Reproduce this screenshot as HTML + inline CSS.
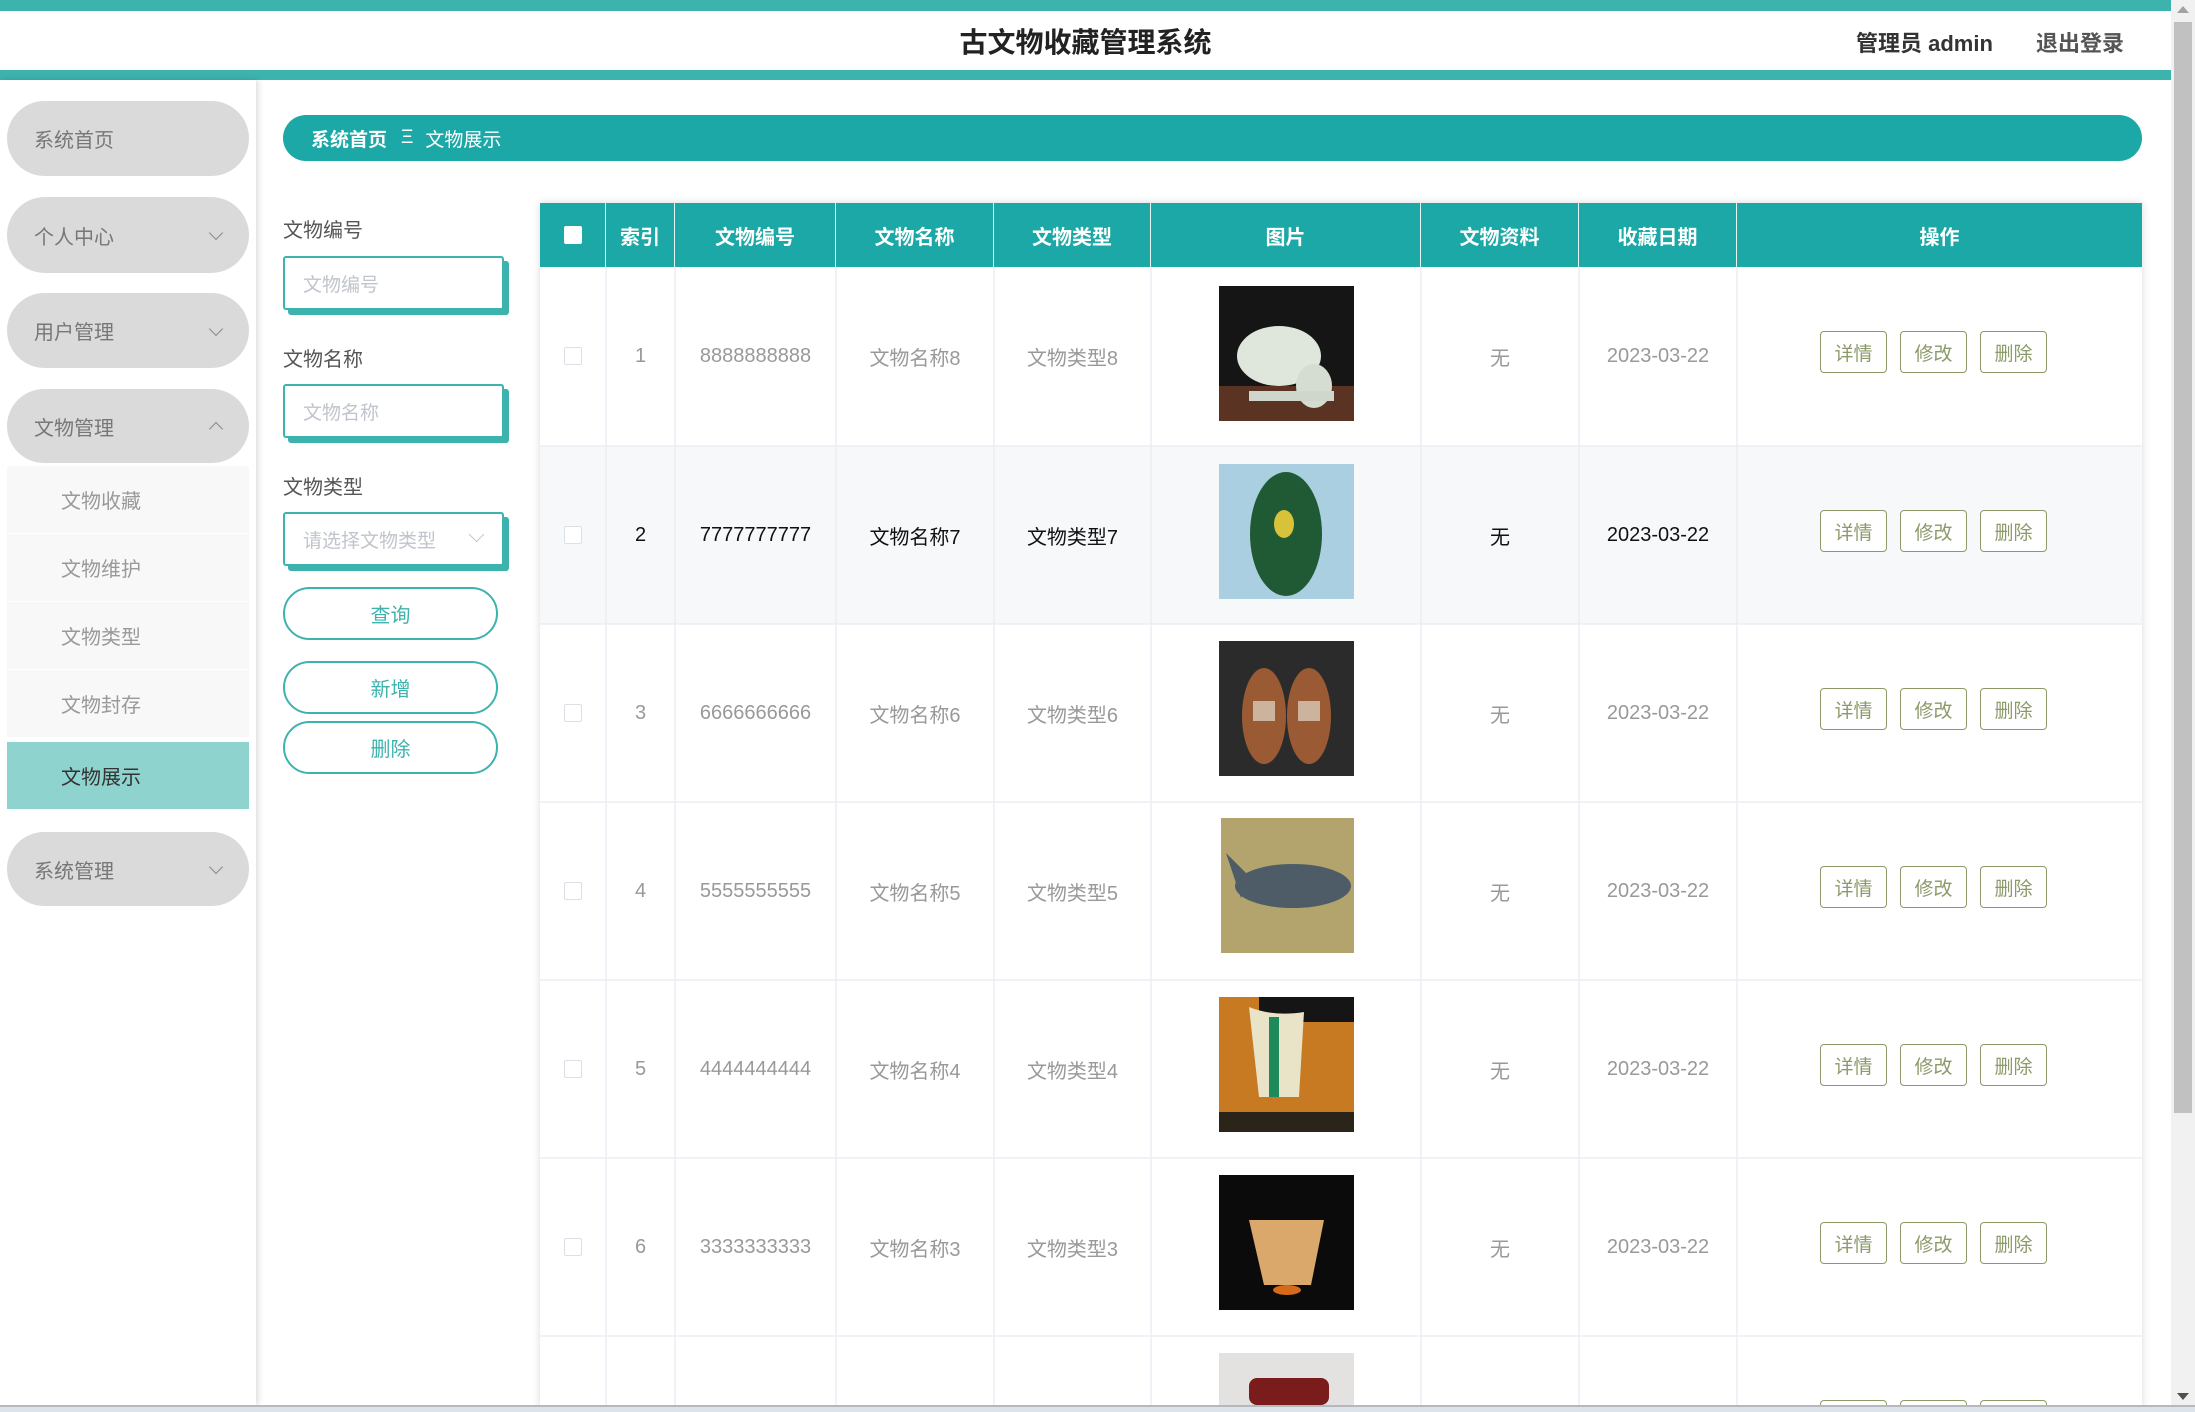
<!DOCTYPE html>
<html style="width:2195px;height:1412px;overflow:hidden"><head><meta charset="utf-8"><style>
*{margin:0;padding:0;box-sizing:border-box}
body{width:2195px;height:1412px;overflow:hidden;background:#fff;font-family:"Liberation Sans","Noto Sans CJK SC",sans-serif;position:relative}
.a{position:absolute}
.pill{position:absolute;left:7px;width:242px;background:#dadada;border-radius:40px;color:#777;font-size:20px;padding-left:27px;display:flex;align-items:center}
.pill .ch{position:absolute;right:28px;top:50%;width:10px;height:10px;border-right:1.5px solid #888;border-bottom:1.5px solid #888;transform:translateY(-70%) rotate(45deg)}
.pill .up{transform:translateY(-20%) rotate(-135deg)}
.sub{position:absolute;left:7px;width:242px;height:67px;background:#f8f8f8;color:#999;font-size:20px;padding-left:54px;display:flex;align-items:center}
.lbl{position:absolute;left:283px;font-size:20px;color:#555}
.inp{position:absolute;left:283px;width:221px;height:54px;border:2px solid #3db3ad;border-radius:3px;box-shadow:5px 5px 0 #3db3ad;color:#c0c4cc;font-size:19px;padding-left:18px;display:flex;align-items:center;background:#fff}
.btn{position:absolute;left:283px;width:215px;height:53px;border:2.5px solid #3db3ad;border-radius:27px;color:#3db3ad;font-size:20px;display:flex;align-items:center;justify-content:center;background:#fff}
.th{position:absolute;top:203px;height:64px;color:#fff;font-weight:bold;font-size:20px;display:flex;align-items:center;justify-content:center;border-right:1px solid #e6f4f4}
.cell{position:absolute;display:flex;align-items:center;justify-content:center;font-size:20px;color:#999}
.ob{position:absolute;width:67px;height:42px;border:1.5px solid #8b9a68;border-radius:4px;color:#8b9a68;font-size:19px;display:flex;align-items:center;justify-content:center;background:#fff}
#clip{position:absolute;left:0;top:0;width:2195px;height:1405px;overflow:hidden}
</style></head><body>
<div id="clip">
<div class="a" style="left:0;top:0;width:2171px;height:11px;background:#3db3ad"></div>
<div class="a" style="left:0;top:70px;width:2171px;height:10px;background:#3db3ad"></div>
<div class="a" style="left:0;top:11px;width:2171px;height:59px;display:flex;align-items:center;justify-content:center;font-size:28px;font-weight:bold;color:#222">古文物收藏管理系统</div>
<div class="a" style="left:1856px;top:26px;font-size:22px;font-weight:bold;color:#333">管理员 admin</div>
<div class="a" style="left:2036px;top:26px;font-size:22px;font-weight:bold;color:#555">退出登录</div>

<div class="a" style="left:0;top:80px;width:256px;height:1325px;background:#fff;box-shadow:2px 0 6px rgba(0,0,0,.15)"></div>
<div class="pill" style="top:101px;height:75px">系统首页</div>
<div class="pill" style="top:197px;height:76px">个人中心<span class="ch"></span></div>
<div class="pill" style="top:293px;height:75px">用户管理<span class="ch"></span></div>
<div class="pill" style="top:389px;height:74px">文物管理<span class="ch up"></span></div>
<div class="sub" style="top:466px">文物收藏</div>
<div class="sub" style="top:534px">文物维护</div>
<div class="sub" style="top:602px">文物类型</div>
<div class="sub" style="top:670px">文物封存</div>
<div class="sub" style="top:742px;background:#8fd3ce;color:#333">文物展示</div>
<div class="pill" style="top:832px;height:74px">系统管理<span class="ch"></span></div>

<div class="a" style="left:283px;top:115px;width:1859px;height:46px;background:#1ca8a6;border-radius:23px;color:#fff;font-size:19px;display:flex;align-items:center;padding-left:28px"><b>系统首页</b><span style="margin:0 12px 0 14px">Ξ</span>文物展示</div>

<div class="lbl" style="top:214px">文物编号</div>
<div class="inp" style="top:256px">文物编号</div>
<div class="lbl" style="top:343px">文物名称</div>
<div class="inp" style="top:384px">文物名称</div>
<div class="lbl" style="top:471px">文物类型</div>
<div class="inp" style="top:512px;font-size:19px">请选择文物类型<span style="position:absolute;right:20px;top:15px;width:11px;height:11px;border-right:1.5px solid #c0c4cc;border-bottom:1.5px solid #c0c4cc;transform:rotate(45deg)"></span></div>
<div class="btn" style="top:587px">查询</div>
<div class="btn" style="top:661px">新增</div>
<div class="btn" style="top:721px">删除</div>

<div class="a" style="left:540px;top:203px;width:1602px;height:1210px;background:#fff;box-shadow:0 0 8px rgba(0,0,0,.15)"></div>
<div class="a" style="left:540px;top:203px;width:1602px;height:64px;background:#1ca8a6"></div>
<div class="th" style="left:540px;width:66px"><span style="width:18px;height:18px;background:#fff;border-radius:2px"></span></div>
<div class="th" style="left:606px;width:69px">索引</div>
<div class="th" style="left:675px;width:161px">文物编号</div>
<div class="th" style="left:836px;width:158px">文物名称</div>
<div class="th" style="left:994px;width:157px">文物类型</div>
<div class="th" style="left:1151px;width:270px">图片</div>
<div class="th" style="left:1421px;width:158px">文物资料</div>
<div class="th" style="left:1579px;width:158px">收藏日期</div>
<div class="th" style="left:1737px;width:405px;border-right:none">操作</div>
<div class="a" style="left:540px;top:446px;width:1602px;height:178px;background:#f7f8fa"></div>
<svg class="a" style="left:540px;top:267px" width="1602" height="1140">
<g stroke="#ebeef5" stroke-width="1.5">
<line x1="66" y1="0" x2="66" y2="1140"/><line x1="135" y1="0" x2="135" y2="1140"/><line x1="296" y1="0" x2="296" y2="1140"/><line x1="454" y1="0" x2="454" y2="1140"/><line x1="611" y1="0" x2="611" y2="1140"/><line x1="881" y1="0" x2="881" y2="1140"/><line x1="1039" y1="0" x2="1039" y2="1140"/><line x1="1197" y1="0" x2="1197" y2="1140"/>
<line x1="0" y1="179" x2="1602" y2="179"/><line x1="0" y1="357" x2="1602" y2="357"/><line x1="0" y1="535" x2="1602" y2="535"/><line x1="0" y1="713" x2="1602" y2="713"/><line x1="0" y1="891" x2="1602" y2="891"/><line x1="0" y1="1069" x2="1602" y2="1069"/>
</g></svg>

<div class="cell" style="left:540px;top:267px;width:66px;height:178px"><span style="width:18px;height:18px;border:1px solid #dcdfe6;border-radius:2px;background:#fff"></span></div>
<div class="cell" style="left:606px;top:267px;width:69px;height:178px">1</div>
<div class="cell" style="left:675px;top:267px;width:161px;height:178px">8888888888</div>
<div class="cell" style="left:836px;top:267px;width:158px;height:178px">文物名称8</div>
<div class="cell" style="left:994px;top:267px;width:157px;height:178px">文物类型8</div>
<svg class="a" style="left:1219px;top:286px" width="135" height="135"><rect width="135" height="135" fill="#151515"/><rect y="100" width="135" height="35" fill="#5a3322"/><ellipse cx="60" cy="70" rx="42" ry="30" fill="#dfe6dc"/><ellipse cx="95" cy="100" rx="18" ry="22" fill="#d5ddd2"/><rect x="30" y="105" width="85" height="10" fill="#cfd6cb"/></svg>
<div class="cell" style="left:1421px;top:267px;width:158px;height:178px">无</div>
<div class="cell" style="left:1579px;top:267px;width:158px;height:178px">2023-03-22</div>
<div class="ob" style="left:1820px;top:331px">详情</div><div class="ob" style="left:1900px;top:331px">修改</div><div class="ob" style="left:1980px;top:331px">删除</div>

<div class="cell" style="left:540px;top:446px;width:66px;height:178px"><span style="width:18px;height:18px;border:1px solid #dcdfe6;border-radius:2px;background:#fff"></span></div>
<div class="cell" style="left:606px;top:446px;width:69px;height:178px;color:#111">2</div>
<div class="cell" style="left:675px;top:446px;width:161px;height:178px;color:#111">7777777777</div>
<div class="cell" style="left:836px;top:446px;width:158px;height:178px;color:#111">文物名称7</div>
<div class="cell" style="left:994px;top:446px;width:157px;height:178px;color:#111">文物类型7</div>
<svg class="a" style="left:1219px;top:464px" width="135" height="135"><rect width="135" height="135" fill="#a9cfe0"/><ellipse cx="67" cy="70" rx="36" ry="62" fill="#1f5a35"/><ellipse cx="65" cy="60" rx="10" ry="14" fill="#d8c23a"/></svg>
<div class="cell" style="left:1421px;top:446px;width:158px;height:178px;color:#111">无</div>
<div class="cell" style="left:1579px;top:446px;width:158px;height:178px;color:#111">2023-03-22</div>
<div class="ob" style="left:1820px;top:510px">详情</div><div class="ob" style="left:1900px;top:510px">修改</div><div class="ob" style="left:1980px;top:510px">删除</div>

<div class="cell" style="left:540px;top:624px;width:66px;height:178px"><span style="width:18px;height:18px;border:1px solid #dcdfe6;border-radius:2px;background:#fff"></span></div>
<div class="cell" style="left:606px;top:624px;width:69px;height:178px">3</div>
<div class="cell" style="left:675px;top:624px;width:161px;height:178px">6666666666</div>
<div class="cell" style="left:836px;top:624px;width:158px;height:178px">文物名称6</div>
<div class="cell" style="left:994px;top:624px;width:157px;height:178px">文物类型6</div>
<svg class="a" style="left:1219px;top:641px" width="135" height="135"><rect width="135" height="135" fill="#2b2b2b"/><ellipse cx="45" cy="75" rx="22" ry="48" fill="#9a5a34"/><ellipse cx="90" cy="75" rx="22" ry="48" fill="#9a5a34"/><rect x="34" y="60" width="22" height="20" fill="#e0d8cc" opacity=".7"/><rect x="79" y="60" width="22" height="20" fill="#e0d8cc" opacity=".7"/></svg>
<div class="cell" style="left:1421px;top:624px;width:158px;height:178px">无</div>
<div class="cell" style="left:1579px;top:624px;width:158px;height:178px">2023-03-22</div>
<div class="ob" style="left:1820px;top:688px">详情</div><div class="ob" style="left:1900px;top:688px">修改</div><div class="ob" style="left:1980px;top:688px">删除</div>

<div class="cell" style="left:540px;top:802px;width:66px;height:178px"><span style="width:18px;height:18px;border:1px solid #dcdfe6;border-radius:2px;background:#fff"></span></div>
<div class="cell" style="left:606px;top:802px;width:69px;height:178px">4</div>
<div class="cell" style="left:675px;top:802px;width:161px;height:178px">5555555555</div>
<div class="cell" style="left:836px;top:802px;width:158px;height:178px">文物名称5</div>
<div class="cell" style="left:994px;top:802px;width:157px;height:178px">文物类型5</div>
<svg class="a" style="left:1221px;top:818px" width="133" height="135"><rect width="133" height="135" fill="#b3a36c"/><ellipse cx="72" cy="68" rx="58" ry="22" fill="#4d5c66"/><polygon points="5,35 30,60 20,80" fill="#4d5c66"/></svg>
<div class="cell" style="left:1421px;top:802px;width:158px;height:178px">无</div>
<div class="cell" style="left:1579px;top:802px;width:158px;height:178px">2023-03-22</div>
<div class="ob" style="left:1820px;top:866px">详情</div><div class="ob" style="left:1900px;top:866px">修改</div><div class="ob" style="left:1980px;top:866px">删除</div>

<div class="cell" style="left:540px;top:980px;width:66px;height:178px"><span style="width:18px;height:18px;border:1px solid #dcdfe6;border-radius:2px;background:#fff"></span></div>
<div class="cell" style="left:606px;top:980px;width:69px;height:178px">5</div>
<div class="cell" style="left:675px;top:980px;width:161px;height:178px">4444444444</div>
<div class="cell" style="left:836px;top:980px;width:158px;height:178px">文物名称4</div>
<div class="cell" style="left:994px;top:980px;width:157px;height:178px">文物类型4</div>
<svg class="a" style="left:1219px;top:997px" width="135" height="135"><rect width="135" height="135" fill="#c77a22"/><rect x="40" width="95" height="25" fill="#151515"/><path d="M30 10 Q55 20 85 15 L80 100 L40 100Z" fill="#e9e3c8"/><rect x="50" y="20" width="10" height="80" fill="#1e8a5b"/><rect x="0" y="115" width="135" height="20" fill="#2a2518"/></svg>
<div class="cell" style="left:1421px;top:980px;width:158px;height:178px">无</div>
<div class="cell" style="left:1579px;top:980px;width:158px;height:178px">2023-03-22</div>
<div class="ob" style="left:1820px;top:1044px">详情</div><div class="ob" style="left:1900px;top:1044px">修改</div><div class="ob" style="left:1980px;top:1044px">删除</div>

<div class="cell" style="left:540px;top:1158px;width:66px;height:178px"><span style="width:18px;height:18px;border:1px solid #dcdfe6;border-radius:2px;background:#fff"></span></div>
<div class="cell" style="left:606px;top:1158px;width:69px;height:178px">6</div>
<div class="cell" style="left:675px;top:1158px;width:161px;height:178px">3333333333</div>
<div class="cell" style="left:836px;top:1158px;width:158px;height:178px">文物名称3</div>
<div class="cell" style="left:994px;top:1158px;width:157px;height:178px">文物类型3</div>
<svg class="a" style="left:1219px;top:1175px" width="135" height="135"><rect width="135" height="135" fill="#0b0b0b"/><path d="M30 45 L105 45 L92 110 L45 110Z" fill="#d9a86a"/><ellipse cx="68" cy="115" rx="14" ry="5" fill="#d46a1a"/></svg>
<div class="cell" style="left:1421px;top:1158px;width:158px;height:178px">无</div>
<div class="cell" style="left:1579px;top:1158px;width:158px;height:178px">2023-03-22</div>
<div class="ob" style="left:1820px;top:1222px">详情</div><div class="ob" style="left:1900px;top:1222px">修改</div><div class="ob" style="left:1980px;top:1222px">删除</div>

<svg class="a" style="left:1219px;top:1353px" width="135" height="52"><rect width="135" height="52" fill="#e4e2e0"/><rect x="30" y="25" width="80" height="27" rx="8" fill="#7a1c1c"/></svg>
<div class="ob" style="left:1820px;top:1400px"></div><div class="ob" style="left:1900px;top:1400px"></div><div class="ob" style="left:1980px;top:1400px"></div>

<div class="a" style="left:2171px;top:0;width:24px;height:1405px;background:#f1f1f1"></div>
<div class="a" style="left:2174px;top:22px;width:18px;height:1091px;background:#c1c1c1"></div>
<div class="a" style="left:2177px;top:6px;width:0;height:0;border-left:6px solid transparent;border-right:6px solid transparent;border-bottom:7px solid #a3a3a3"></div>
<div class="a" style="left:2177px;top:1393px;width:0;height:0;border-left:6px solid transparent;border-right:6px solid transparent;border-top:7px solid #505050"></div>
</div>
<div class="a" style="left:0;top:1405px;width:2195px;height:2px;background:#b5b9bd"></div>
<div class="a" style="left:0;top:1407px;width:2195px;height:5px;background:#dde3ea"></div>
</body></html>
